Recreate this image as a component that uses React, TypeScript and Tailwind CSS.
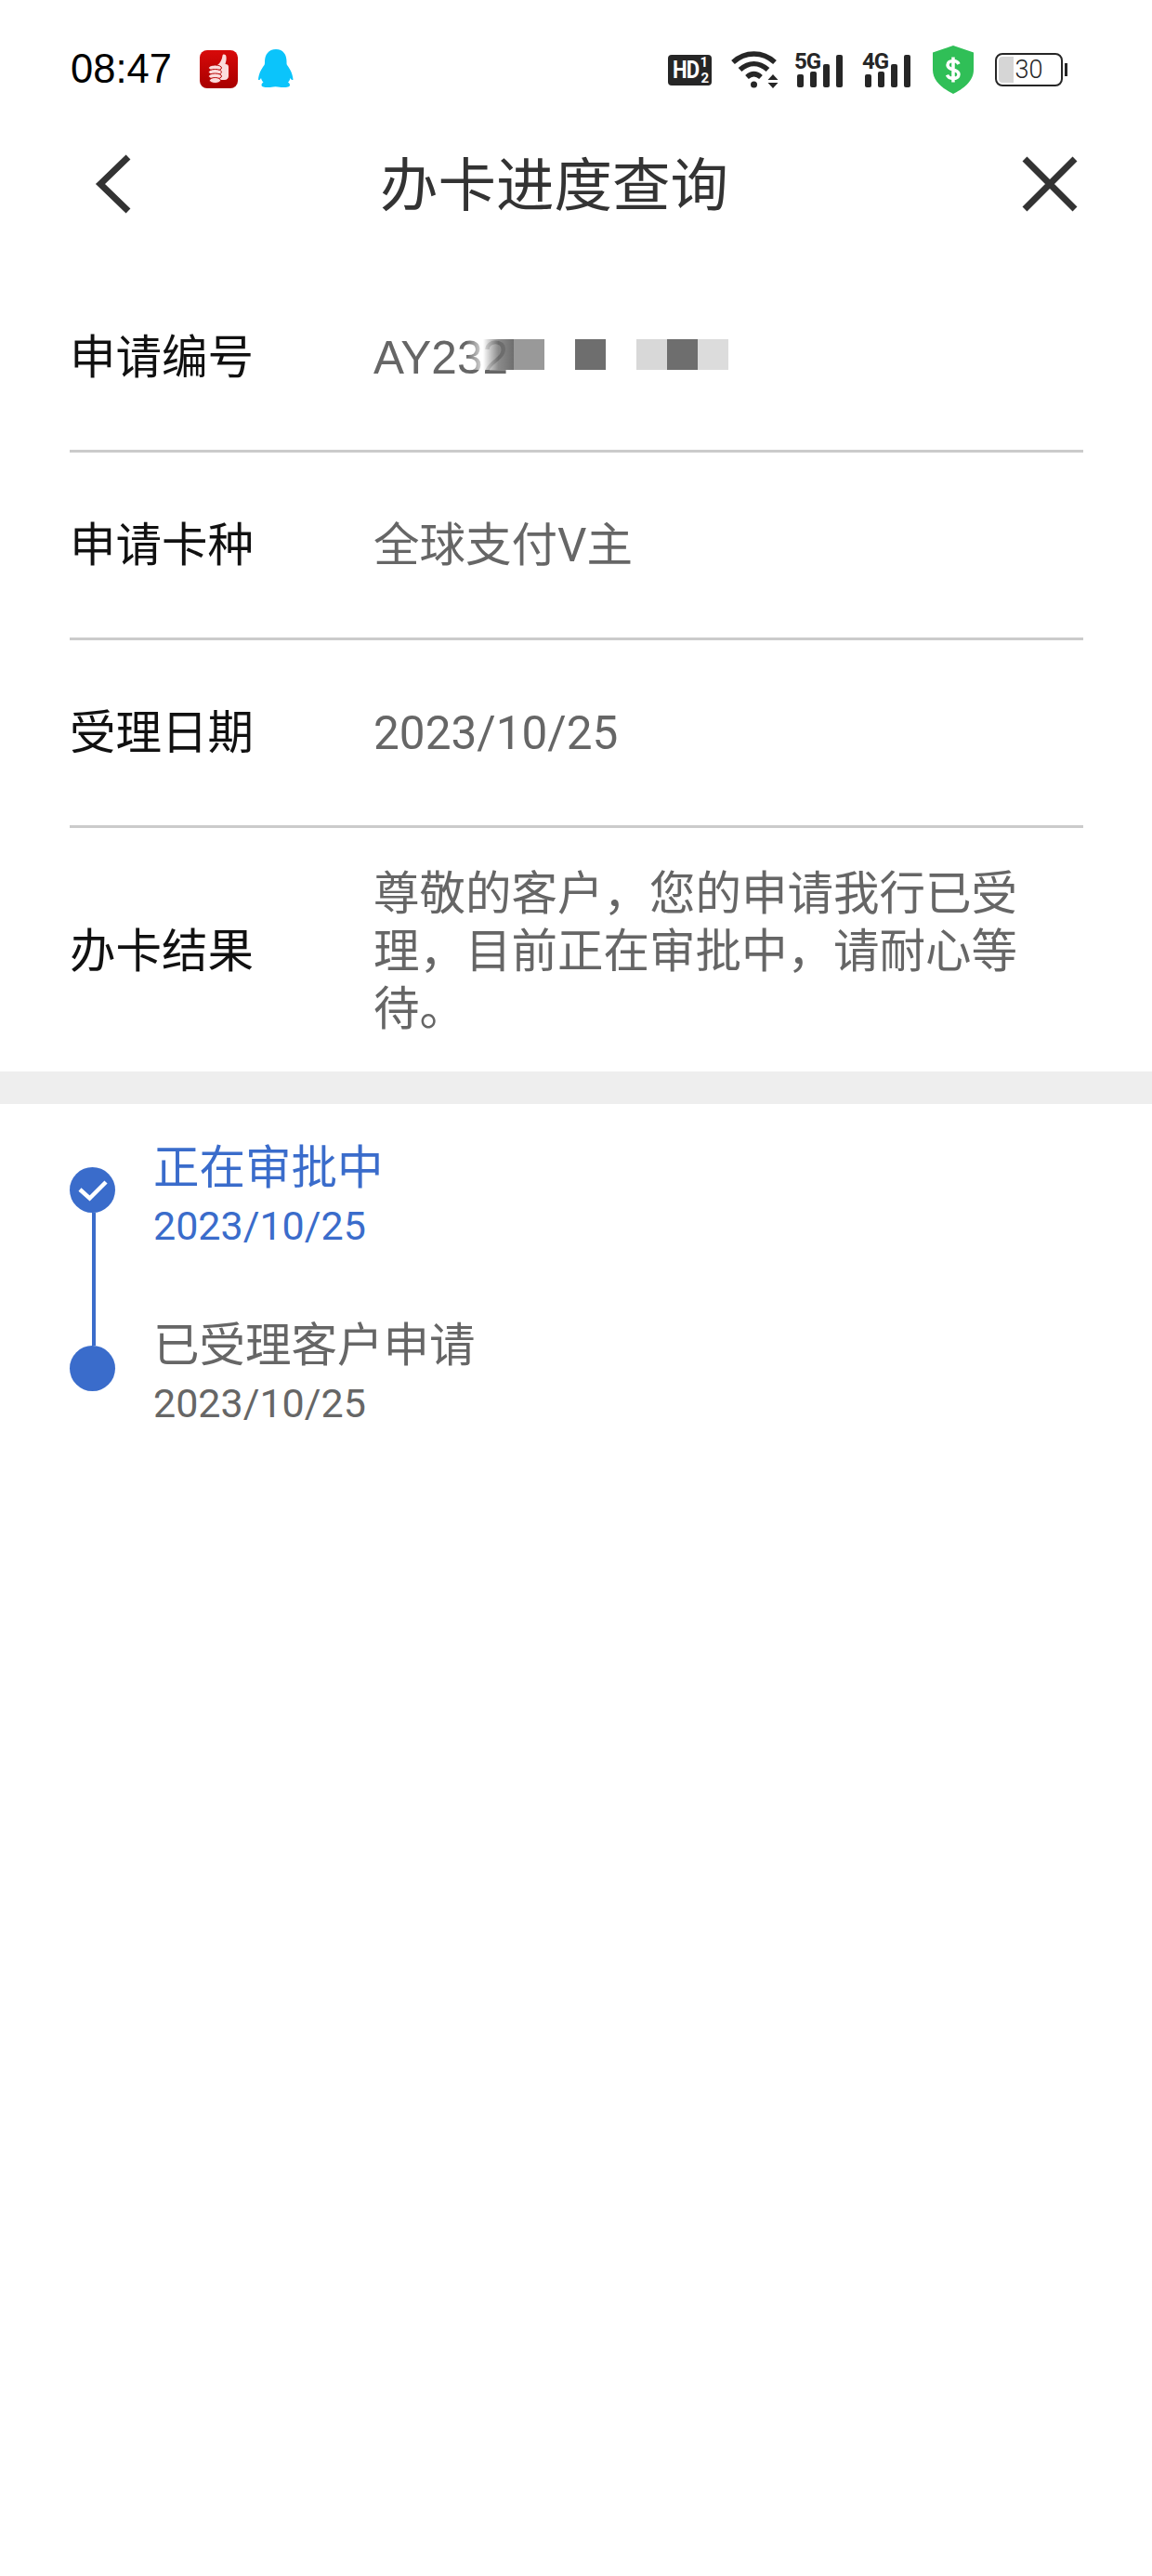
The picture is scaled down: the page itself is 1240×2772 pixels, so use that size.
const SANS = "font-['Roboto','Noto_Sans_CJK_SC',sans-serif]";

const ThumbApp = () => (
  <div className="w-[41px] h-[41px] rounded-[8px] bg-gradient-to-b from-[#d80a0a] to-[#a80000] flex items-center justify-center">
    <svg width="28" height="34" viewBox="0 0 28 34" fill="none">
      <path d="M13 13c3-2 5-6 5.500-10 .2-2 3.500-2 4 1 .5 3-.5 6-1 8 2.500 0 3.500 1 3.500 3v10c0 2-1.500 4-4.500 4h-6" fill="#fbdcdc" />
      <ellipse cx="10.500" cy="16" rx="7" ry="3" fill="#fbdcdc" stroke="#b80505" strokeWidth="1" />
      <ellipse cx="10.500" cy="20.500" rx="7" ry="3" fill="#fbdcdc" stroke="#b80505" strokeWidth="1" />
      <ellipse cx="10.500" cy="25" rx="7" ry="3" fill="#fbdcdc" stroke="#b80505" strokeWidth="1" />
      <ellipse cx="10.500" cy="29.500" rx="6" ry="3" fill="#fbdcdc" stroke="#b80505" strokeWidth="1" />
    </svg>
  </div>
);

const Penguin = () => (
  <svg width="38" height="42" viewBox="0 0 38 42" fill="#0bc4fb">
    <path d="M19 0c8 0 11.500 6 11.500 13 0 2 0 3 .5 4 3 4 6 9 6.500 15.500-.2 1-1.500 1-3-1.500-.5 2-1.500 3.500-2.500 4.500 1.500 1 2 2 2 3 0 2-3 2.500-7 2.500-3 0-5-.8-8.500-.8S13.500 41 10.500 41c-4 0-7-.5-7-2.500 0-1 .5-2 2-3-1-1-2-2.500-2.500-4.500-1.500 2.500-2.800 2.500-3 1.500C.5 26 3.500 21 6.500 17c.5-1 .5-2 .5-4C7 6 11 0 19 0z" />
  </svg>
);

const HdBadge = () => (
  <div className="relative w-[47px] h-[33px] rounded-[4px] bg-[#262626] text-white flex items-center pl-[5px] font-['Roboto',sans-serif] font-bold leading-none">
    <span className="text-[26px] tracking-[-1px] scale-x-[0.85] origin-left">HD</span>
    <span className="absolute right-[4px] top-[1px] text-[15px] leading-[15px]">1</span>
    <span className="absolute right-[3px] bottom-[0px] text-[15px] leading-[15px]">2</span>
  </div>
);

const Wifi = () => (
  <svg width="54" height="42" viewBox="0 0 54 42" fill="none">
    <path d="M2 13C15 1 34 1 47 13" stroke="#262626" strokeWidth="5.500" />
    <path d="M9.500 21C19 12.500 30 12.500 39.500 21" stroke="#262626" strokeWidth="5.500" />
    <path d="M17 29C22 24.500 27 24.500 32 29" stroke="#262626" strokeWidth="5.500" />
    <circle cx="24.500" cy="37" r="3.500" fill="#262626" />
    <path d="M45 26L50.500 32H39.500zM39.500 35H50.500L45 41z" fill="#262626" />
  </svg>
);

const Signal = ({ label }: { label: string }) => (
  <div className="relative w-[53px] h-[38px]">
    <span className="absolute left-0 top-[-2px] text-[24px] leading-[24px] font-bold tracking-[-1px] text-[#262626] font-['Roboto',sans-serif]">{label}</span>
    <div className="absolute left-[3px] bottom-0 flex items-end gap-[7px]">
      <div className="w-[7px] h-[14px] rounded-[2px] bg-[#262626]" />
      <div className="w-[7px] h-[17px] rounded-[2px] bg-[#262626]" />
      <div className="w-[7px] h-[25px] rounded-[2px] bg-[#262626]" />
      <div className="w-[7px] h-[35px] rounded-[2px] bg-[#262626]" />
    </div>
  </div>
);

const Shield = () => (
  <svg width="48" height="52" viewBox="0 0 48 52">
    <path d="M24 0L46 7.500V26C46 39 34 47 24 52C14 47 2 39 2 26V7.500z" fill="#30bf57" />
    <path d="M30 20c-1-2.500-3.500-3.500-6-3.500-3.500 0-6 1.800-6 4.500s2.500 4 6 5 6 2.200 6 5-2.500 4.500-6 4.500c-3 0-5.500-1.200-6.500-3.800M24 12.500v27" fill="none" stroke="#fff" strokeWidth="3.500" />
  </svg>
);

const Battery = () => (
  <div className="flex items-center gap-[2px]">
    <div className="relative w-[73px] h-[36px] rounded-[8px] border-[2px] border-[#262626] p-[2px]">
      <div className="h-full w-[16px] rounded-l-[4px] bg-[#d6d6d6]" />
      <span className="absolute inset-0 flex items-center justify-center text-[27px] leading-none font-light text-[#262626] font-['Roboto',sans-serif]">30</span>
    </div>
    <div className="w-[3px] h-[14px] bg-[#262626]" />
  </div>
);

const StatusBar = () => (
  <div className="h-[130px] pl-[76px] pr-[91px] flex items-start justify-between">
    <div className="flex items-center pt-[53px] gap-[30px]">
      <span className="text-[43.500px] leading-[42px] text-black font-['Liberation_Sans',sans-serif]">08:47</span>
      <div className="flex items-center gap-[22px]">
        <ThumbApp />
        <Penguin />
      </div>
    </div>
    <div className="flex items-center pt-[48px] h-[102px]">
      <HdBadge />
      <div className="ml-[21px]"><Wifi /></div>
      <div className="ml-[14px]"><Signal label="5G" /></div>
      <div className="ml-[20px]"><Signal label="4G" /></div>
      <div className="ml-[21px]"><Shield /></div>
      <div className="ml-[21px]"><Battery /></div>
    </div>
  </div>
);

const Header = () => (
  <div className="h-[136px] pl-[100px] pr-[80px] flex items-center">
    <svg width="44" height="64" viewBox="0 0 44 64" fill="none">
      <path d="M38 3L8 32L38 61" stroke="#333" strokeWidth="7" />
    </svg>
    <h1 className="ml-[265px] mt-[6px] text-[62.500px] leading-[70px] font-normal text-[#333]">办卡进度查询</h1>
    <svg width="60" height="60" viewBox="0 0 60 60" fill="none" className="ml-auto">
      <path d="M3 3L57 57M57 3L3 57" stroke="#333" strokeWidth="7" />
    </svg>
  </div>
);

const Row = ({ label, children, tall }: { label: string; children: React.ReactNode; tall?: boolean }) => (
  <div className={`flex items-center ${tall ? "h-[262px] pt-[3px]" : "h-[202px] border-b-[3px] border-[#cbcbcb]"}`}>
    <div className="w-[327px] shrink-0 text-[49.500px] leading-[60px] text-[#111]">{label}</div>
    <div className="text-[49.500px] leading-[62px] text-[#666]">{children}</div>
  </div>
);

const Cell = ({ bg }: { bg: string }) => <div className={`w-[33px] h-[33px] ${bg}`} />;

const Serial = () => (
  <div className="relative w-[560px] h-[62px]">
    <span className="font-['Liberation_Sans',sans-serif]">AY232</span>
    <div className="absolute left-[100px] top-[11px] flex">
      <div className="w-[18px] h-[33px] bg-gradient-to-r from-white/0 to-white/80" />
      <div className="w-[33px] h-[33px] bg-gradient-to-r from-white/80 via-[#6e6e6e]/80 to-[#6e6e6e]" />
      <Cell bg="bg-[#999]" />
      <div className="w-[33px]" />
      <Cell bg="bg-[#6e6e6e]" />
      <div className="w-[33px]" />
      <Cell bg="bg-[#d8d8d8]" />
      <Cell bg="bg-[#6e6e6e]" />
      <Cell bg="bg-[#dcdcdc]" />
    </div>
  </div>
);

const Step = ({ title, date, active }: { title: string; date: string; active?: boolean }) => (
  <div className={`h-[191px] ${active ? "text-[#3a6ccb]" : "text-[#666]"}`}>
    <div className="text-[49.500px] leading-[60px]">{title}</div>
    <div className="text-[43px] leading-[48px] mt-[8px] font-['Roboto',sans-serif]">{date}</div>
  </div>
);

const Timeline = () => (
  <div className="pl-[75px] pt-[39px] flex gap-[41px]">
    <div className="w-[49px] shrink-0 flex flex-col items-center pt-[29px]">
      <div className="w-[49px] h-[49px] rounded-full bg-[#3a6ccb] flex items-center justify-center">
        <svg width="34" height="26" viewBox="0 0 34 26" fill="none">
          <path d="M3 12L13.500 21.500L31 4" stroke="#fff" strokeWidth="4.500" />
        </svg>
      </div>
      <div className="w-[4px] h-[143px] bg-[#3a6ccb] translate-x-[1px]" />
      <div className="w-[49px] h-[49px] rounded-full bg-[#3a6ccb]" />
    </div>
    <div>
      <Step title="正在审批中" date="2023/10/25" active />
      <Step title="已受理客户申请" date="2023/10/25" />
    </div>
  </div>
);

export default function App() {
  return (
    <div className={`w-[1240px] h-[2772px] bg-white ${SANS}`}>
      <StatusBar />
      <Header />
      <div className="mx-[75px] mt-[19px] w-[1091px]">
        <Row label="申请编号"><Serial /></Row>
        <Row label="申请卡种">全球支付V主</Row>
        <Row label="受理日期"><span className="font-['Roboto',sans-serif]">2023/10/25</span></Row>
        <Row label="办卡结果" tall>
          <div className="w-[700px]">尊敬的客户，您的申请我行已受理，目前正在审批中，请耐心等待。</div>
        </Row>
      </div>
      <div className="h-[35px] bg-[#eeeeee]" />
      <Timeline />
    </div>
  );
}
